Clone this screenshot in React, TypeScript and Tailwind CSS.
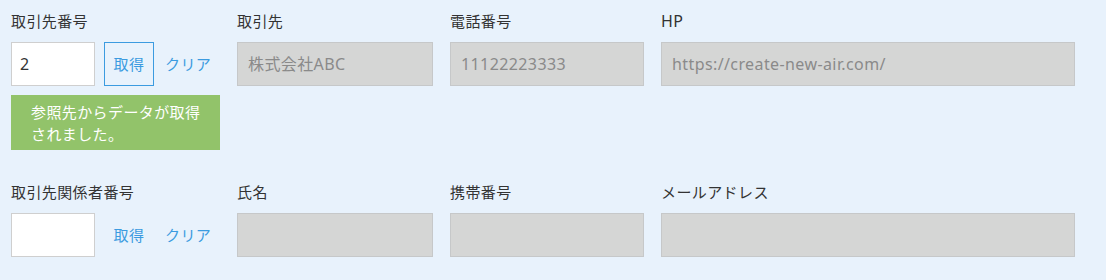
import React from "react";

const font = { fontFamily: '"Noto Sans", "Noto Sans CJK JP", sans-serif' };

function Label({ children }: { children: React.ReactNode }) {
  return <div className="mb-[10px] h-[22px] text-[15px] leading-[22px] tracking-[0.4px] text-[#333]">{children}</div>;
}

function ReadonlyField({ value }: { value?: string }) {
  return (
    <div className="flex h-[44px] items-center border border-[#c6c8c9] bg-[#d5d6d5] px-[10px] text-[16px] tracking-[0.4px] text-[#8a8a8a]">
      {value}
    </div>
  );
}

function LookupField({ value, bordered }: { value: string; bordered: boolean }) {
  return (
    <div className="flex items-center">
      <div className="flex h-[44px] w-[84px] items-center border border-[#cfcfcf] bg-white px-[8px] text-[16px] text-[#333]">
        {value}
      </div>
      <button
        type="button"
        className={
          "ml-[9px] h-[44px] w-[50px] border text-[15px] tracking-[0.4px] text-[#3b9be0] " +
          (bordered ? "border-[#3b9be0]" : "border-transparent")
        }
      >
        取得
      </button>
      <button type="button" className="ml-[11px] text-[15px] tracking-[0.4px] text-[#3b9be0]">
        クリア
      </button>
    </div>
  );
}

export default function App() {
  return (
    <div style={font} className="h-[280px] w-[1106px] bg-[#e8f2fc] pl-[11px] pt-[10px]">
      <div className="grid grid-cols-[209px_196px_194px_414px] gap-x-[17px]">
        <div>
          <Label>取引先番号</Label>
          <LookupField value="2" bordered />
          <div className="mt-[9px] bg-[#92c36a] py-[5.5px] pl-[20px] pr-[12px] text-[15px] leading-[22px] tracking-[0.4px] text-white">
            参照先からデータが取得されました。
          </div>
        </div>
        <div>
          <Label>取引先</Label>
          <ReadonlyField value="株式会社ABC" />
        </div>
        <div>
          <Label>電話番号</Label>
          <ReadonlyField value="11122223333" />
        </div>
        <div>
          <Label>
            <span className="text-[16px]">HP</span>
          </Label>
          <ReadonlyField value="https://create-new-air.com/" />
        </div>
      </div>

      <div className="mt-[31px] grid grid-cols-[209px_196px_194px_414px] gap-x-[17px]">
        <div>
          <Label>取引先関係者番号</Label>
          <LookupField value="" bordered={false} />
        </div>
        <div>
          <Label>氏名</Label>
          <ReadonlyField />
        </div>
        <div>
          <Label>携帯番号</Label>
          <ReadonlyField />
        </div>
        <div>
          <Label>メールアドレス</Label>
          <ReadonlyField />
        </div>
      </div>
    </div>
  );
}
